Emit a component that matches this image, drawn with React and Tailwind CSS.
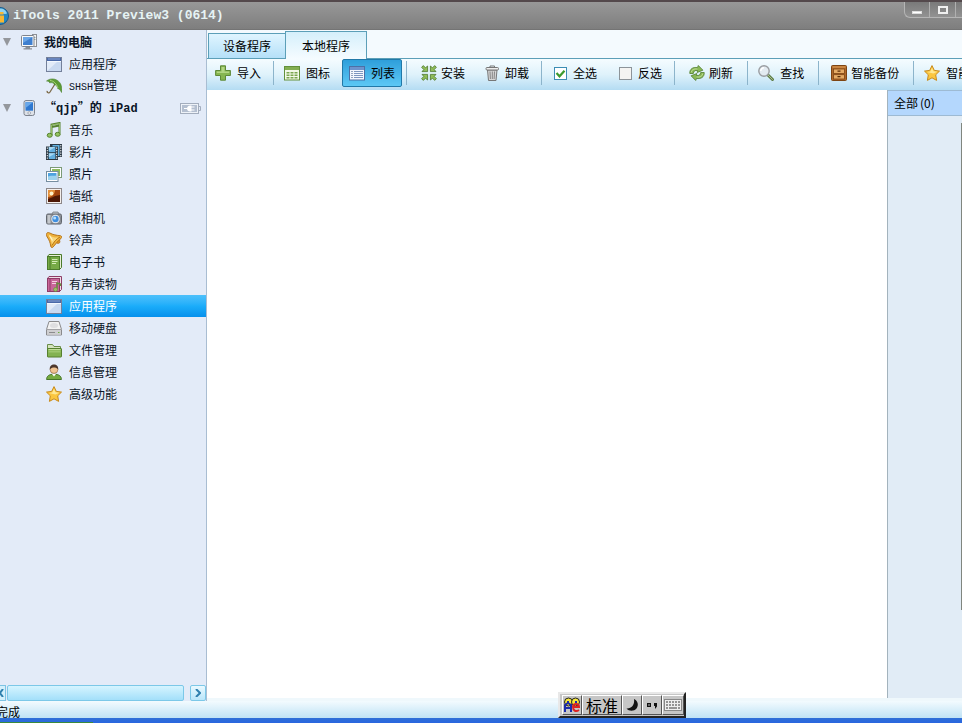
import React, { useState } from 'react';
import clsx from 'clsx';

// 16x16 icons
const Icon = ({ children, className = 'w-4 h-4' }) => (
  <svg viewBox="0 0 16 16" className={clsx('shrink-0', className)} aria-hidden="true">
    {children}
  </svg>
);

const ComputerIcon = () => (
  <Icon>
    <rect x="11.5" y="0.5" width="4" height="12" fill="#f4f4f4" stroke="#8b8f96" />
    <path d="M12.5 3.5h2M12.5 5.5h2" stroke="#9aa" />
    <rect x="0.5" y="1.5" width="12.5" height="11" rx="1" fill="#fafafa" stroke="#7e838c" />
    <rect x="2" y="3" width="9.500" height="8" fill="#3f7fcf" />
    <path d="M2 3h9.500L2 9z" fill="#6aa5e6" />
    <path d="M4.5 13h4.500v1.2h2v1.3h-8.500v-1.300h2z" fill="#8b9098" />
  </Icon>
);

const WindowIcon = () => (
  <Icon>
    <rect x="0.5" y="1.5" width="15" height="14" fill="#c9d9f0" stroke="#74809a" />
    <rect x="1" y="2" width="14" height="3" fill="#4a69a8" />
    <path d="M2 3h12" stroke="#89a4d6" />
    <path d="M1 5.5h14" stroke="#f3f8ff" />
    <path d="M1 6h10L1 15z" fill="#e2ebf8" />
  </Icon>
);

const UmbrellaIcon = () => (
  <Icon>
    <path d="M9 6L4 14C3 15.600 .8 14.800 1.200 12.800" fill="none" stroke="#7c6a48" strokeWidth="1.3" />
    <path d="M.5 3C5-.8 12 .7 14.700 6c1.300 3 1.400 6 .800 8.500-1.200-2.500-2.200-3.600-3.800-3.900C11.600 8.500 10.300 7 8.400 6.600 7.500 4.600 5 4.200 3.800 5 3.300 3.800 2.300 3.100.5 3z" fill="#5d9c34" stroke="#3f7622" strokeWidth=".5" />
    <path d="M4 2.500c4 .200 6.500 3.500 8 7.500" fill="none" stroke="#a8d27a" />
  </Icon>
);

const PhoneIcon = () => (
  <Icon>
    <rect x="3" y="0.500" width="10.500" height="15" rx="2" fill="#dde1e8" stroke="#7d838e" />
    <rect x="4.500" y="2.200" width="7.500" height="8.500" fill="#2f78d0" />
    <path d="M4.500 2.200H12L4.500 8z" fill="#69a8ea" />
    <circle cx="8.200" cy="13" r="1.300" fill="#fff" stroke="#858b95" strokeWidth=".7" />
  </Icon>
);

const MusicIcon = () => (
  <Icon>
    <path d="M5.500 13V2.500L13.500 1v10.500M5.500 5l8-1.600" fill="none" stroke="#55812f" strokeWidth="2" />
    <path d="M5.500 13V3l8-1.500v10" fill="none" stroke="#a3cc74" strokeWidth=".8" />
    <ellipse cx="3.700" cy="13.300" rx="2.500" ry="2" fill="#94c361" stroke="#55812f" />
    <ellipse cx="11.700" cy="12.300" rx="2.500" ry="2" fill="#94c361" stroke="#55812f" />
  </Icon>
);

const FilmIcon = () => (
  <Icon>
    <path d="M4 0h12v13H4z" fill="#2c3a47" />
    <path d="M6.500 1h7v11h-7z" fill="#62b2e2" />
    <path d="M0 2.500h12V16H0z" fill="#293641" />
    <path d="M2.800 3h6.600v5.300H2.800zM2.800 9.300h6.600V15H2.800z" fill="#63afe0" />
    <path d="M2.800 3h6.600L2.800 7zM2.800 9.300h6.600l-6.600 4z" fill="#a6d8f4" />
    <path d="M1.300 3.500V16M10.700 3.500V16M14.800 1v12" stroke="#fff" strokeWidth="1" strokeDasharray="1.300 1.200" />
  </Icon>
);

const PhotosIcon = () => (
  <Icon>
    <rect x="4.500" y="1.500" width="11" height="10" fill="#fff" stroke="#7c9a76" />
    <path d="M6 3h8v7H6z" fill="#8dbb5e" />
    <rect x="0.500" y="5.500" width="11.500" height="10" fill="#fff" stroke="#768ea0" />
    <path d="M2 7h8.500v7H2z" fill="#4da2df" />
    <path d="M2 10.500c3-1.500 5 0 8.500-1V14H2z" fill="#9dd3ee" />
  </Icon>
);

const WallpaperIcon = () => (
  <Icon>
    <rect x="0.500" y="0.500" width="15" height="15" fill="#f4efec" stroke="#8d8788" />
    <path d="M2 2h12v12H2z" fill="#a3460f" />
    <path d="M2 2h7c0 4-3 7-7 7z" fill="#e5903a" />
    <circle cx="5.500" cy="5.500" r="1.900" fill="#fff3cc" />
    <path d="M2 11l4-1.500L9 8l5-1v7H2z" fill="#4d1805" />
  </Icon>
);

const CameraIcon = () => (
  <Icon>
    <rect x="0.500" y="4" width="15" height="10" rx="1.500" fill="#8d9197" stroke="#62676e" />
    <path d="M1.500 5h3v8.500h-3z" fill="#c5c8cc" />
    <path d="M6 4l1-2h5l1 2z" fill="#b9bdc3" stroke="#6e7279" strokeWidth=".7" />
    <circle cx="9.500" cy="9" r="4.600" fill="#eef1f5" stroke="#6b7079" strokeWidth=".6" />
    <circle cx="9.500" cy="9" r="3.200" fill="#3f8fe0" />
    <circle cx="8.700" cy="8" r="1.500" fill="#b5defc" />
  </Icon>
);

const BellIcon = () => (
  <Icon>
    <circle cx="12" cy="9.500" r="2" fill="#dd9626" stroke="#a9640f" strokeWidth=".6" />
    <path d="M1.200.8C.2 1.600.2 3.500 1.200 5c2 3 3 5.500 3.500 9 .2 1.700 1.500 2 2.500.9C9 13 12 8.500 15 6.500c1.200-1 .9-2.300-.5-2.800C10.500 3.300 7 2.800 3.800 1 2.700.400 1.900.300 1.200.8z" fill="#efb23c" stroke="#b06d14" strokeWidth=".9" />
    <path d="M3 3c3 2.200 6 2.800 10 2.500C9.500 7.500 7.500 10.500 6 13 5.500 9.500 4.500 6 3 3z" fill="#f9d77b" />
    <path d="M14 5C10 7 8 10 6 13.500" fill="none" stroke="#b87816" strokeWidth="1" />
    <path d="M3.500 3.500l3 5" stroke="#fff3c6" strokeWidth="1.200" />
  </Icon>
);

const BookIcon = () => (
  <Icon>
    <path d="M3 .500h12.500v13l-2 2H1.500v-13z" fill="#e8efd9" stroke="#4b7b2b" />
    <rect x="1.500" y="2.500" width="12" height="13" fill="#76aa46" stroke="#4b7b2b" />
    <path d="M4 3v12" stroke="#4b7b2b" />
    <path d="M6 5.500h5.500M6 7.500h5.500M6 9.500h4" stroke="#d4ecb7" />
  </Icon>
);

const AudioBookIcon = () => (
  <Icon>
    <path d="M3 .500h12.500v13l-2 2H1.500v-13z" fill="#f0dde6" stroke="#8e3c66" />
    <rect x="1.500" y="2.500" width="12" height="13" fill="#c9659a" stroke="#8e3c66" />
    <path d="M4 3v12" stroke="#8e3c66" />
    <path d="M6 5.500h5M6 7.500h4" stroke="#f5cfe2" />
    <path d="M11 13.500V7l3.500 1v2" fill="none" stroke="#67883e" strokeWidth="1.500" />
    <circle cx="9.500" cy="13.500" r="2" fill="#9cbd63" stroke="#67883e" strokeWidth=".6" />
  </Icon>
);

const DriveIcon = () => (
  <Icon>
    <path d="M3 1.500h10l2.500 8v5.500H.500V9.500z" fill="#f2f2f2" stroke="#8a8a8c" />
    <path d="M1 10h14v4.500H1z" fill="#cfcfd1" />
    <path d="M1 9.500h14" stroke="#a2a2a5" />
    <ellipse cx="8" cy="5.500" rx="4" ry="2.500" fill="#dedee0" />
    <path d="M3 12.500h6" stroke="#8b8b8d" />
    <path d="M12 12.500h1.500" stroke="#68b13f" />
  </Icon>
);

const FolderIcon = () => (
  <Icon>
    <path d="M1.500 14.500v-12h5l1.500 2h6.500v10z" fill="#d5e4bf" stroke="#6a8d49" />
    <rect x="1.500" y="6.500" width="14" height="8.500" rx=".5" fill="#83b251" stroke="#56802f" />
    <path d="M2.500 7.500h12" stroke="#c2e09c" />
    <path d="M2.500 8.500h12v2h-12z" fill="#9dc66e" />
  </Icon>
);

const UserIcon = () => (
  <Icon>
    <path d="M.6 15.500c0-3.500 2.500-5.300 7.400-5.300s7.400 1.800 7.400 5.300z" fill="#75ab40" stroke="#47752a" />
    <path d="M6 10l2 2.500 2-2.500z" fill="#fff" />
    <circle cx="8" cy="5.500" r="3.900" fill="#f0c391" stroke="#8a5c33" strokeWidth=".6" />
    <path d="M3.800 5.500C3.500 2 5.500.400 8 .400s4.500 1.600 4.200 5.100C11 4 9.500 3.500 8 3.500s-3 .5-4.200 2z" fill="#4d372c" />
  </Icon>
);

const StarIcon = () => (
  <Icon>
    <path d="M8 .6l2.300 4.800 5.200.700-3.800 3.700.9 5.600L8 12.800l-4.600 2.600.9-5.600L.5 6.100l5.200-.7z" fill="#fbc63f" stroke="#c88a1c" strokeLinejoin="round" />
    <path d="M8 2.800l1.500 3.500 3.800.5-4 1.700L3 7l3.300-.6z" fill="#ffe893" />
  </Icon>
);

const PlusIcon = () => (
  <Icon>
    <path d="M5.500.800h5v4.700h4.900v5h-4.900v4.700h-5v-4.700H.600v-5h4.900z" fill="#86b650" stroke="#5d8a37" strokeLinejoin="round" />
    <path d="M6.500 2h3v4.500h4.700v1.500H1.800V6.500h4.700z" fill="#b2d684" />
  </Icon>
);

const GridIcon = () => (
  <Icon>
    <rect x="0.500" y="1.500" width="15" height="13.500" fill="#f3f9e9" stroke="#62903b" />
    <path d="M1 2h14v3H1z" fill="#82ae51" />
    <path d="M2.500 7h3v1.500h-3zM6.500 7h3v1.500h-3zM10.500 7h3v1.500h-3zM2.500 9.500h3V11h-3zM6.500 9.500h3V11h-3zM10.500 9.500h3V11h-3zM2.500 12h3v1.500h-3zM6.500 12h3v1.500h-3zM10.500 12h3v1.500h-3z" fill="#7ba650" />
  </Icon>
);

const ListIcon = () => (
  <Icon>
    <rect x="0.500" y="1.500" width="15" height="13.500" fill="#f2f7fe" stroke="#4d6fa5" />
    <path d="M1 2h14v3H1z" fill="#6c93cd" />
    <path d="M2.500 6.500h1M2.500 8.500h1M2.500 10.500h1M2.500 12.500h1" stroke="#35517e" />
    <path d="M5 6.500h9M5 8.500h9M5 10.500h9M5 12.500h9" stroke="#7d97c0" />
  </Icon>
);

const InstallIcon = () => (
  <Icon>
    <g fill="#8fbd5a" stroke="#4d762c" strokeWidth=".8" strokeLinejoin="round">
      <path d="M.6 2.300L2.300.600l2.200 2.200L6.600 1v5.600H1l1.800-2z" />
      <path d="M15.400 2.300L13.700.600l-2.200 2.200L9.400 1v5.600H15l-1.800-2z" />
      <path d="M.6 13.700l1.700 1.700 2.200-2.200L6.600 15V9.400H1l1.800 2z" />
      <path d="M15.400 13.700l-1.700 1.700-2.200-2.200L9.400 15V9.400H15l-1.800 2z" />
    </g>
  </Icon>
);

const TrashIcon = () => (
  <Icon>
    <path d="M2.500 5H12l-1 10.500H3.500z" fill="#d6d6d6" stroke="#777" />
    <path d="M5 6.500l.4 7.500M7.300 6.500V14M9.500 6.500L9.100 14" stroke="#858585" />
    <rect x="1" y="2.500" width="12.500" height="2.500" rx="1" fill="#ededed" stroke="#777" />
    <path d="M5 2.500V1h4.500v1.500" fill="none" stroke="#777" />
  </Icon>
);

const RefreshIcon = () => (
  <Icon>
    <g fill="#8ab957" stroke="#4f7b2c" strokeWidth=".8" strokeLinejoin="round">
      <path d="M.8 8.500C.5 4 4 1.700 8.500 2.700L9.300.500l4.600 4.700-5.700 2.300.4-2C6 5 4.600 6.200 4.300 8.500z" />
      <path d="M15.200 7.500c.3 4.500-3.200 6.800-7.700 5.800l-.8 2.200-4.600-4.700 5.700-2.300-.4 2c2.600.5 4-.7 4.300-3z" />
    </g>
    <path d="M2.200 7.500C2.500 4.800 5 3.500 8.500 4M13.800 8.500c-.3 2.700-2.800 4-6.300 3.500" fill="none" stroke="#c6e2a0" strokeWidth=".8" />
  </Icon>
);

const SearchIcon = () => (
  <Icon>
    <path d="M10 10l4.500 4.500" stroke="#5f7d47" strokeWidth="3" strokeLinecap="round" />
    <path d="M10 10l4.500 4.500" stroke="#a9bf8e" strokeWidth="1" strokeLinecap="round" />
    <circle cx="6" cy="6" r="5.200" fill="#e3ebf1" stroke="#9a9da1" strokeWidth="1.400" />
    <path d="M2.800 6a3.200 3.200 0 013.200-3.200" fill="none" stroke="#fff" strokeWidth="1.500" />
  </Icon>
);

const CabinetIcon = () => (
  <Icon>
    <rect x="0.500" y="0.500" width="15" height="15" rx="1" fill="#b0682a" stroke="#7d4513" />
    <path d="M1.500 2h13" stroke="#e2a35b" />
    <rect x="2.500" y="4" width="11" height="4.500" fill="#e5ab65" stroke="#7d4513" strokeWidth=".8" />
    <rect x="2.500" y="9.700" width="11" height="4.300" fill="#e5ab65" stroke="#7d4513" strokeWidth=".8" />
    <path d="M6.500 6.200h3M6.500 11.700h3" stroke="#5a2f0a" strokeWidth="1.200" />
  </Icon>
);

const BatteryIcon = () => (
  <svg viewBox="0 0 21 11" className="w-[21px] h-[11px] shrink-0" aria-hidden="true">
    <rect x="0.500" y="0.500" width="18" height="10" fill="#eef2f8" stroke="#a3adbd" />
    <path d="M19 3.500h1.500v4H19" fill="none" stroke="#a3adbd" />
    <path d="M2 2h15v7H2z" fill="#b4bfd0" />
    <path d="M4 5.500h3M11 4h3.500M11 7h3.500" stroke="#fff" strokeWidth="1.200" />
    <path d="M11.500 2.500v6C8.500 9 7 7.500 7 5.500s1.500-3.500 4.500-3z" fill="#fff" />
  </svg>
);

const Arrow = () => (
  <svg viewBox="0 0 9 8" className="w-[9px] h-2 shrink-0" aria-hidden="true">
    <path d="M1 0h8L5 8z" fill="#94979c" />
  </svg>
);

const groups = [
  {
    title: <>我的电脑</>,
    icon: ComputerIcon,
    items: [
      { id: 'pc-apps', label: '应用程序', icon: WindowIcon },
      { id: 'shsh', label: <><span className="font-['Liberation_Mono',monospace] text-[10px]">SHSH</span>管理</>, icon: UmbrellaIcon },
    ],
  },
  {
    title: (
      <>
        “<span className="font-['Liberation_Mono',monospace]">qjp</span>”的
        <span className="font-['Liberation_Mono',monospace]"> iPad</span>
      </>
    ),
    icon: PhoneIcon,
    battery: true,
    items: [
      { id: 'music', label: '音乐', icon: MusicIcon },
      { id: 'movies', label: '影片', icon: FilmIcon },
      { id: 'photos', label: '照片', icon: PhotosIcon },
      { id: 'wallpaper', label: '墙纸', icon: WallpaperIcon },
      { id: 'camera', label: '照相机', icon: CameraIcon },
      { id: 'ringtones', label: '铃声', icon: BellIcon },
      { id: 'ebooks', label: '电子书', icon: BookIcon },
      { id: 'audiobooks', label: '有声读物', icon: AudioBookIcon },
      { id: 'apps', label: '应用程序', icon: WindowIcon },
      { id: 'disk', label: '移动硬盘', icon: DriveIcon },
      { id: 'files', label: '文件管理', icon: FolderIcon },
      { id: 'info', label: '信息管理', icon: UserIcon },
      { id: 'advanced', label: '高级功能', icon: StarIcon },
    ],
  },
];

const TitleBar = () => (
  <header className="flex h-[30px] shrink-0 items-center border-t-2 border-b border-t-[#54494c] border-b-[#747474] bg-linear-to-b from-[#989898] to-[#7e7e7e]">
    <svg viewBox="8 0 9 18" className="w-[9px] h-[18px] shrink-0" aria-hidden="true">
      <circle cx="8" cy="9" r="8.500" fill="#2387c4" stroke="#155a8c" />
      <path d="M8 1.500c4 0 6 2 7 5-2 1-5 0-7-1z" fill="#8fd3f2" />
      <path d="M8 5h3.500v2.500H8zM8 8.500h4v7H8z" fill="#f7b733" />
    </svg>
    <h1 className="ml-1 font-['Liberation_Mono',monospace] text-[13px] font-bold whitespace-pre text-[#e6f3f4]">
      iTools 2011 Preview3 (0614)
    </h1>
    <div className="ml-auto flex h-4 shrink-0 self-start overflow-hidden rounded-bl-md border-b border-l border-[#b5b5b5] bg-linear-to-b from-[#7a7a7a] to-[#929292]">
      <button aria-label="最小化" className="flex w-[25px] items-end justify-center border-r border-[#b0b0b0] pb-[3px]">
        <span className="h-[3px] w-2.5 border border-[#ddd] bg-white" />
      </button>
      <button aria-label="最大化" className="flex w-[26px] items-center justify-center border-r border-[#b0b0b0]">
        <span className="h-2 w-2.5 border-2 border-[#f0f0f0]" />
      </button>
      <button aria-label="关闭" className="w-1.5" />
    </div>
  </header>
);

const Sidebar = () => {
  const [selected, setSelected] = useState('apps');

  return (
    <aside className="flex w-[207px] shrink-0 flex-col border-r border-[#a9bdd2] bg-[#e3ebf8]">
      <nav className="min-h-0 flex-1 overflow-hidden pt-px">
        {groups.map((group, i) => (
          <div key={i}>
            <button className="flex h-[22px] w-full items-center pr-[5px] pl-0.5 text-left font-bold">
              <Arrow />
              <span className="mr-[7px] ml-2.5 flex"><group.icon /></span>
              <span className="whitespace-pre">{group.title}</span>
              {group.battery && <span className="ml-auto"><BatteryIcon /></span>}
            </button>
            {group.items.map((item) => (
              <button
                key={item.id}
                onClick={() => setSelected(item.id)}
                className={clsx(
                  'flex h-[22px] w-full items-center gap-[7px] pl-[46px] text-left',
                  selected === item.id && 'bg-linear-to-b from-[#4cc0fb] via-[#1badfa] to-[#0690ec] text-white'
                )}
              >
                <item.icon />
                <span>{item.label}</span>
              </button>
            ))}
          </div>
        ))}
      </nav>

      {/* Horizontal scroll bar */}
      <div className="flex h-4 shrink-0">
        <button aria-label="向左滚动" className="flex w-1.5 items-center border-y border-r border-[#7dc4e4] bg-[#d3f0fc]">
          <svg viewBox="0 0 4 8" className="h-2 w-1" aria-hidden="true">
            <path d="M3 0L0 4l3 4" fill="none" stroke="#2e7fae" strokeWidth="2" />
          </svg>
        </button>
        <div className="ml-px flex-1 rounded-xs border border-[#7cc8e8] bg-linear-to-b from-[#d5f4ff] to-[#a3dffa]" />
        <button aria-label="向右滚动" className="ml-1.5 flex w-4 items-center justify-center rounded-xs border border-[#7cc8e8] bg-linear-to-b from-[#e9f9ff] to-[#b9e6fa]">
          <svg viewBox="0 0 6 8" className="h-2 w-1.5" aria-hidden="true">
            <path d="M1 0l4 4-4 4" fill="none" stroke="#2e7fae" strokeWidth="2" />
          </svg>
        </button>
      </div>
    </aside>
  );
};

const ToolGroup = ({ className, children }) => (
  <div className={clsx('flex h-6 shrink-0 items-center border-r border-[#8cb4cb]', className)}>{children}</div>
);

const ToolButton = ({ icon: ToolIcon, label, gap = 'gap-1.5', active }) => (
  <button
    className={clsx(
      'flex shrink-0 items-center whitespace-nowrap',
      gap,
      active
        ? 'h-7 rounded-xs border border-[#2179a8] bg-linear-to-b from-[#2e9fdb] to-[#5cc8f5] px-1.5'
        : 'px-2'
    )}
  >
    <ToolIcon />
    <span>{label}</span>
  </button>
);

const ToolCheck = ({ label, checked, onChange }) => (
  <label className="flex shrink-0 items-center gap-1.5 px-2 whitespace-nowrap">
    <span className="relative flex">
      <input
        type="checkbox"
        checked={checked}
        onChange={onChange}
        className="h-[13px] w-[13px] appearance-none border border-[#8d9499] bg-[#f4f4f2] checked:border-[#3c8db4] checked:bg-white"
      />
      {checked && (
        <svg viewBox="0 0 13 13" className="pointer-events-none absolute inset-0" aria-hidden="true">
          <path d="M2.500 6L5.500 9.300 10.500 3.800" fill="none" stroke="#3c9a2d" strokeWidth="2.200" />
        </svg>
      )}
    </span>
    {label}
  </label>
);

const Toolbar = () => {
  const [all, setAll] = useState(true);
  const [inverse, setInverse] = useState(false);

  return (
    <div className="flex h-[31px] shrink-0 items-center overflow-hidden bg-linear-to-b from-[#f5fcff] via-[#dff2fb] to-[#b4dcf3] pb-[3px] text-black">
      <ToolGroup className="pr-1">
        <ToolButton icon={PlusIcon} label="导入" />
      </ToolGroup>
      <ToolGroup className="gap-1 pr-1 pl-0.5">
        <ToolButton icon={GridIcon} label="图标" />
        <ToolButton icon={ListIcon} label="列表" active />
      </ToolGroup>
      <ToolGroup className="gap-1 pr-1 pl-1.5">
        <ToolButton icon={InstallIcon} label="安装" gap="gap-1" />
        <ToolButton icon={TrashIcon} label="卸载" gap="gap-1" />
      </ToolGroup>
      <ToolGroup className="gap-1.5 px-1">
        <ToolCheck label="全选" checked={all} onChange={() => setAll(!all)} />
        <ToolCheck label="反选" checked={inverse} onChange={() => setInverse(!inverse)} />
      </ToolGroup>
      <ToolGroup className="px-1.5">
        <ToolButton icon={RefreshIcon} label="刷新" gap="gap-1" />
      </ToolGroup>
      <ToolGroup className="pr-1.5 pl-0.5">
        <ToolButton icon={SearchIcon} label="查找" />
      </ToolGroup>
      <ToolGroup className="pr-1.5 pl-1">
        <ToolButton icon={CabinetIcon} label="智能备份" gap="gap-1" />
      </ToolGroup>
      <ToolGroup className="pl-0.5">
        <ToolButton icon={StarIcon} label="智能恢复" />
      </ToolGroup>
    </div>
  );
};

const tabClass = 'border border-b-0 border-[#5c9fb8] text-black whitespace-nowrap';

// Input method bar floating over the bottom of the window
const InputBar = () => {
  const cell = 'flex h-5 items-center justify-center border border-t-white border-l-white border-r-[#555] border-b-[#555] bg-[#c6c6c6]';
  return (
    <div className="absolute bottom-[5px] left-[58%] flex items-center border-2 border-t-[#e8e8e8] border-l-[#e8e8e8] border-r-[#222] border-b-[#222] bg-[#c6c6c6] py-px pl-0.5 text-black">
      <button aria-label="输入法" className={clsx(cell, 'w-5')}>
        <svg viewBox="0 0 18 16" className="h-4 w-[18px]" aria-hidden="true">
          <circle cx="5.500" cy="5" r="4" fill="#f5e53a" stroke="#222" />
          <circle cx="12.500" cy="5" r="4" fill="#f5e53a" stroke="#222" />
          <path d="M2 15V8l3-2 3 2v7M2 11h6" fill="none" stroke="#1b2ba8" strokeWidth="2" />
          <path d="M10 10h6c0-4-6-4-6 0s3 5 6 3" fill="none" stroke="#d22" strokeWidth="2" />
          <path d="M4 5h2M12 5h2" stroke="#1b2ba8" strokeWidth="2" />
        </svg>
      </button>
      <button className={clsx(cell, 'w-10 text-base')}>标准</button>
      <button aria-label="半角" className={clsx(cell, 'w-5')}>
        <svg viewBox="0 0 14 14" className="h-3.5 w-3.5" aria-hidden="true">
          <path d="M9 1c4 2 5 6 2.500 9.500C9 13.500 4 13.500 1.500 10.500 6 11 10 7 9 1z" fill="#111" />
        </svg>
      </button>
      <button aria-label="标点" className={clsx(cell, 'w-5')}>
        <svg viewBox="0 0 14 14" className="h-3.5 w-3.5" aria-hidden="true">
          <rect x="2.700" y="5.700" width="2.600" height="2.600" fill="#fff" stroke="#111" strokeWidth="1.400" />
          <path d="M9 5h3v3.500L10 11V8H9z" fill="#111" />
        </svg>
      </button>
      <button aria-label="软键盘" className={clsx(cell, 'w-[22px]')}>
        <svg viewBox="0 0 18 12" className="h-3 w-[18px]" aria-hidden="true">
          <rect x=".5" y=".5" width="17" height="11" fill="#eee" stroke="#888" />
          <path d="M2 3h14M2 6h14" stroke="#777" strokeWidth="1.500" strokeDasharray="2 1" />
          <path d="M2 9h2M5 9h8M14 9h2" stroke="#777" strokeWidth="1.500" />
        </svg>
      </button>
    </div>
  );
};

const App = () => {
  const [tab, setTab] = useState('local');
  const on = 'h-7 bg-linear-to-b from-[#d5effb] to-[#f5fcff] px-4';
  const off = 'h-[25px] bg-linear-to-b from-[#e0f5ff] to-[#b5e0f8] px-3.5';

  return (
    <div className="relative flex h-screen flex-col overflow-hidden bg-white font-['Noto_Sans_CJK_SC',sans-serif] text-xs text-[#0a1426]">
      <TitleBar />

      <div className="flex min-h-0 flex-1">
        <Sidebar />

        <main className="flex min-w-0 flex-1 flex-col">
          {/* Tabs */}
          <div className="flex h-[29px] shrink-0 items-end border-b border-[#5c9fb8] bg-[#f4fafe] pl-px" role="tablist">
            <button role="tab" aria-selected={tab === 'device'} onClick={() => setTab('device')} className={clsx(tabClass, tab === 'device' ? on : off)}>
              设备程序
            </button>
            <button role="tab" aria-selected={tab === 'local'} onClick={() => setTab('local')} className={clsx(tabClass, '-mb-px -ml-px', tab === 'local' ? on : off)}>
              本地程序
            </button>
          </div>

          <Toolbar />

          <div className="flex min-h-0 flex-1">
            <section className="flex-1 bg-white" />
            <aside className="flex w-[75px] shrink-0 flex-col border-l border-[#a3b3bd] bg-[#e1ecf6]">
              <h2 className="flex h-[26px] shrink-0 items-center border-y border-[#9dbad3] bg-[#b4d7fd] pl-1.5 text-black">
                全部<span className="ml-0.5">(0)</span>
              </h2>
              <div className="mt-[7px] mb-[88px] ml-auto w-px flex-1 bg-[#80867f]" />
            </aside>
          </div>
          <div className="h-[3px] shrink-0 bg-[#eff8fc]" />
        </main>
      </div>

      <footer className="flex h-[17px] shrink-0 items-end bg-linear-to-b from-[#f3fbfe] to-[#bfe2f5] text-black">
        <span className="-ml-1 leading-3">完成</span>
      </footer>
      <div className="flex h-[5px] shrink-0 items-end bg-linear-to-b from-[#2f6fd6] to-[#2a66e0]">
        <div className="h-px w-[93px] bg-[#3a8a3c]" />
      </div>

      <InputBar />
    </div>
  );
};

export default App;
